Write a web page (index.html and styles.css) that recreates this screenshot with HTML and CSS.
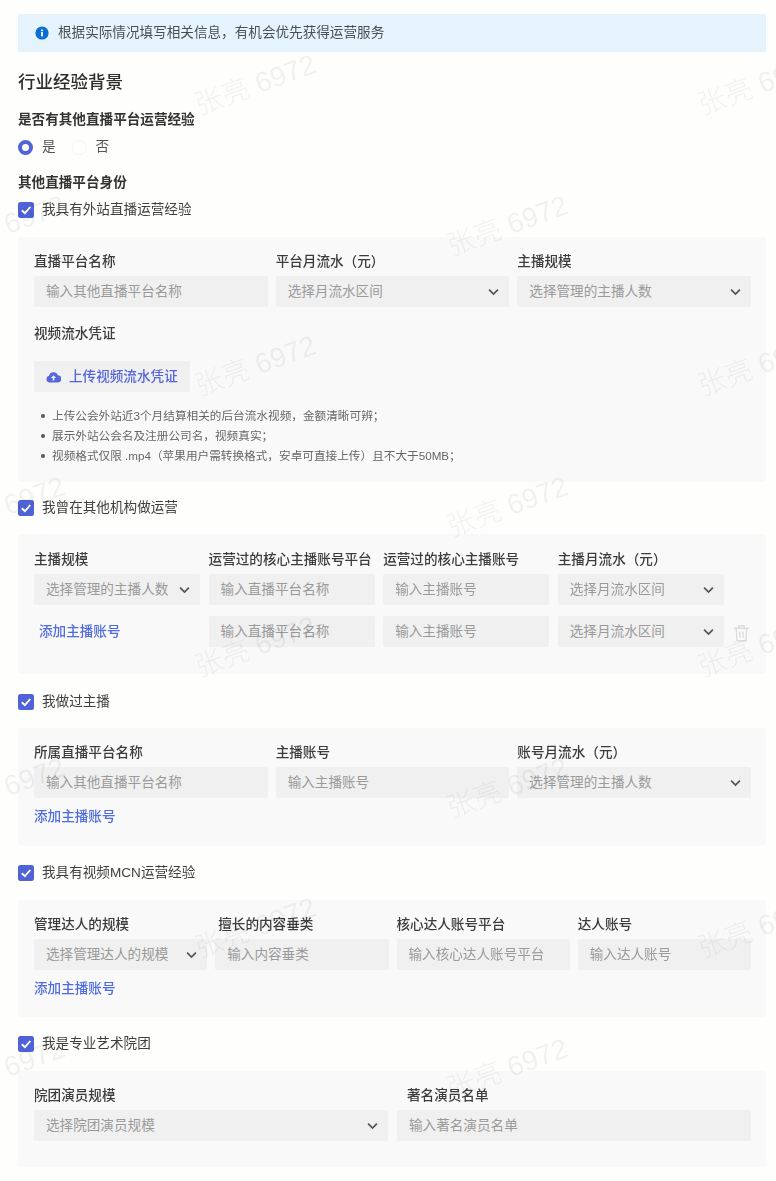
FILE: index.html
```html
<!DOCTYPE html>
<html lang="zh-CN">
<head>
<meta charset="utf-8">
<title>行业经验背景</title>
<link rel="stylesheet" href="styles.css">
</head>
<body>
<svg class="defs" width="0" height="0" aria-hidden="true">
  <symbol id="chev" viewBox="0 0 12 8"><path d="M1.2 1.4 6 6.2l4.8-4.8" fill="none" stroke="#555" stroke-width="1.9"/></symbol>
  <symbol id="tick" viewBox="0 0 16 16"><path d="M3.8 8.2 6.9 11.2 12.3 5" fill="none" stroke="#fff" stroke-width="1.9"/></symbol>
</svg>
<div class="page">
  <div class="alert">
    <svg class="alert-icon" viewBox="0 0 14 14"><circle cx="7" cy="7" r="6.6" fill="#0b6fd3"/><rect x="6.1" y="6" width="1.8" height="4.4" fill="#fff"/><rect x="6.1" y="3.5" width="1.8" height="1.7" fill="#fff"/></svg>
    <span>根据实际情况填写相关信息，有机会优先获得运营服务</span>
  </div>
  <h1 class="title">行业经验背景</h1>
  <div class="q q-first">是否有其他直播平台运营经验</div>
  <div class="radios">
    <span class="radio on"></span><span class="radio-text">是</span>
    <span class="radio off"></span><span class="radio-text">否</span>
  </div>
  <div class="q q-second">其他直播平台身份</div>

  <div class="check check-first"><span class="box"><svg viewBox="0 0 16 16"><use href="#tick"/></svg></span><span>我具有外站直播运营经验</span></div>
  <section class="panel p1">
    <div class="grid three">
      <div class="field"><label>直播平台名称</label><div class="input">输入其他直播平台名称</div></div>
      <div class="field"><label>平台月流水（元）</label><div class="input">选择月流水区间<svg class="chev"><use href="#chev"/></svg></div></div>
      <div class="field"><label>主播规模</label><div class="input">选择管理的主播人数<svg class="chev"><use href="#chev"/></svg></div></div>
    </div>
    <label class="upload-label">视频流水凭证</label>
    <div class="upload">
      <svg class="cloud" viewBox="0 0 16 12"><path d="M4 11.8a3.6 3.6 0 0 1-.7-7.1A4.9 4.9 0 0 1 12.6 4 3.9 3.9 0 0 1 12.2 11.8Z" fill="#5565dc"/><path d="M8 4 5.2 7h1.9v2.8h1.8V7h1.9Z" fill="#f0f0f0"/></svg>
      <span>上传视频流水凭证</span>
    </div>
    <ul class="notes">
      <li>上传公会外站近3个月结算相关的后台流水视频，金额清晰可辨；</li>
      <li>展示外站公会名及注册公司名，视频真实；</li>
      <li>视频格式仅限 .mp4（苹果用户需转换格式，安卓可直接上传）且不大于50MB；</li>
    </ul>
  </section>

  <div class="check"><span class="box"><svg viewBox="0 0 16 16"><use href="#tick"/></svg></span><span>我曾在其他机构做运营</span></div>
  <section class="panel p2">
    <div class="grid four-fixed">
      <div class="field"><label>主播规模</label><div class="input">选择管理的主播人数<svg class="chev"><use href="#chev"/></svg></div></div>
      <div class="field"><label>运营过的核心主播账号平台</label><div class="input">输入直播平台名称</div></div>
      <div class="field"><label>运营过的核心主播账号</label><div class="input">输入主播账号</div></div>
      <div class="field"><label>主播月流水（元）</label><div class="input">选择月流水区间<svg class="chev"><use href="#chev"/></svg></div></div>
    </div>
    <div class="grid four-fixed row-two">
      <a class="add add-inset">添加主播账号</a>
      <div class="input">输入直播平台名称</div>
      <div class="input">输入主播账号</div>
      <div class="input input-del">选择月流水区间<svg class="chev"><use href="#chev"/></svg>
        <svg class="trash" viewBox="0 0 16 17"><path d="M1 4h14M5.5 4V1.6h5V4M3 4l.8 11.8h8.4L13 4M6.5 7v6M9.5 7v6" fill="none" stroke="#dcdcdc" stroke-width="1.3"/></svg>
      </div>
    </div>
  </section>

  <div class="check check-three"><span class="box"><svg viewBox="0 0 16 16"><use href="#tick"/></svg></span><span>我做过主播</span></div>
  <section class="panel p3">
    <div class="grid three">
      <div class="field"><label>所属直播平台名称</label><div class="input">输入其他直播平台名称</div></div>
      <div class="field"><label>主播账号</label><div class="input">输入主播账号</div></div>
      <div class="field"><label>账号月流水（元）</label><div class="input">选择管理的主播人数<svg class="chev"><use href="#chev"/></svg></div></div>
    </div>
    <a class="add add-below">添加主播账号</a>
  </section>

  <div class="check check-four"><span class="box"><svg viewBox="0 0 16 16"><use href="#tick"/></svg></span><span>我具有视频MCN运营经验</span></div>
  <section class="panel p4">
    <div class="grid four">
      <div class="field"><label>管理达人的规模</label><div class="input">选择管理达人的规模<svg class="chev"><use href="#chev"/></svg></div></div>
      <div class="field"><label class="nudge">擅长的内容垂类</label><div class="input">输入内容垂类</div></div>
      <div class="field"><label>核心达人账号平台</label><div class="input">输入核心达人账号平台</div></div>
      <div class="field"><label>达人账号</label><div class="input">输入达人账号</div></div>
    </div>
    <a class="add add-below">添加主播账号</a>
  </section>

  <div class="check check-four"><span class="box"><svg viewBox="0 0 16 16"><use href="#tick"/></svg></span><span>我是专业艺术院团</span></div>
  <section class="panel p5">
    <div class="grid two">
      <div class="field"><label>院团演员规模</label><div class="input">选择院团演员规模<svg class="chev"><use href="#chev"/></svg></div></div>
      <div class="field"><label class="nudge-wide">著名演员名单</label><div class="input">输入著名演员名单</div></div>
    </div>
  </section>

  <div class="marks" aria-hidden="true">
    <div class="mark-row odd"><span>张亮 6972</span><span>张亮 6972</span></div>
    <div class="mark-row"><span>张亮 6972</span><span>张亮 6972</span></div>
    <div class="mark-row odd"><span>张亮 6972</span><span>张亮 6972</span></div>
    <div class="mark-row"><span>张亮 6972</span><span>张亮 6972</span></div>
    <div class="mark-row odd"><span>张亮 6972</span><span>张亮 6972</span></div>
    <div class="mark-row"><span>张亮 6972</span><span>张亮 6972</span></div>
    <div class="mark-row odd"><span>张亮 6972</span><span>张亮 6972</span></div>
    <div class="mark-row"><span>张亮 6972</span><span>张亮 6972</span></div>
  </div>
</div>
</body>
</html>
```

FILE: styles.css
```css
* { box-sizing: border-box; }
html, body { margin: 0; padding: 0; background: #fefefd; }
body {
  font-family: "Liberation Sans", "Noto Sans CJK SC", sans-serif;
  font-size: 13.6px;
  line-height: 20px;
  color: #3a3a3a;
}
.defs { position: absolute; }
.page {
  position: relative;
  width: 776px;
  height: 1181px;
  overflow: hidden;
  padding: 14px 10px 0 18px;
  filter: blur(0.4px);
}
.alert {
  display: flex;
  align-items: center;
  height: 38px;
  padding-left: 17px;
  gap: 9px;
  background: #e5f3fd;
  color: #4a4f55;
  border-radius: 2px;
}
.alert-icon { width: 14px; height: 14px; flex: none; }
.title {
  margin: 18px 0 0;
  font-size: 17.5px;
  line-height: 24px;
  font-weight: 500;
  color: #2e2e2e;
}
.q { font-weight: 700; color: #333; }
.q-first { margin-top: 16px; }
.q-second { margin-top: 16px; }
.radios { display: flex; align-items: center; height: 20px; margin-top: 7px; color: #555; }
.radio { width: 15px; height: 15px; border-radius: 50%; flex: none; }
.radio.on { border: 4.5px solid #4f62d8; background: #fff; }
.radio.off { border: 1px solid #f4f4f2; background: #fff; margin-left: 16px; }
.radio-text { margin-left: 9px; }
.check {
  display: flex;
  align-items: center;
  height: 20px;
  margin-top: 16px;
  gap: 8px;
  color: #3f3f3f;
}
.check-first { margin-top: 7px; }
.check-three { margin-top: 18px; }
.check-four { margin-top: 17px; }
.box {
  width: 16px;
  height: 16px;
  border-radius: 2.5px;
  background: #4f62d8;
  flex: none;
  display: flex;
}
.box svg { width: 16px; height: 16px; }
.panel {
  margin-top: 16px;
  padding: 15px 15px 0 16px;
  background: #f9f9f9;
  border-radius: 3px;
}
.p1 { height: 245px; margin-top: 17px; }
.p2 { height: 140px; padding-top: 16px; }
.p3 { height: 118px; }
.p4 { height: 117px; margin-top: 17px; }
.p5 { height: 96px; margin-top: 17px; }
.grid { display: grid; }
.three { grid-template-columns: repeat(3, 1fr); column-gap: 8px; }
.four { grid-template-columns: repeat(4, 1fr); column-gap: 8px; }
.two { grid-template-columns: repeat(2, 1fr); column-gap: 9px; }
.four-fixed { grid-template-columns: repeat(4, 166px); column-gap: 8.6px; align-items: center; }
.row-two { margin-top: 11px; }
.field { min-width: 0; }
label { display: block; margin-bottom: 4px; color: #3c3c3c; font-weight: 500; white-space: nowrap; }
.nudge { margin-left: 3px; }
.nudge-wide { margin-left: 10px; }
.input {
  position: relative;
  height: 31px;
  line-height: 31px;
  padding-left: 12px;
  background: #f0f0f0;
  color: #9a9a9a;
  border-radius: 2px;
  white-space: nowrap;
}
.chev {
  position: absolute;
  right: 10px;
  top: 12px;
  width: 11px;
  height: 8px;
}
.trash {
  position: absolute;
  left: calc(100% + 9px);
  top: 8px;
  width: 17px;
  height: 18px;
}
.upload-label { margin: 17px 0 0; }
.upload {
  display: flex;
  align-items: center;
  width: 156px;
  height: 31px;
  margin-top: 17px;
  padding-left: 12px;
  gap: 8px;
  background: #f0f0f0;
  border-radius: 2px;
  color: #5565dc;
  font-weight: 500;
}
.cloud { width: 15px; height: 12px; flex: none; }
.notes {
  list-style: none;
  margin: 14px 0 0;
  padding: 0 0 0 18px;
  font-size: 11.65px;
  color: #666;
}
.notes li { position: relative; white-space: nowrap; }
.notes li::before {
  content: "";
  position: absolute;
  left: -11px;
  top: 8px;
  width: 4px;
  height: 4px;
  border-radius: 50%;
  background: #555;
}
.add { display: block; color: #4f6ce0; font-weight: 500; }
.add-inset { margin-left: 5px; }
.add-below { margin-top: 9px; }
.marks {
  position: absolute;
  left: -247.5px;
  top: 15px;
  pointer-events: none;
  font-size: 28px;
  font-weight: 300;
  color: rgba(0, 0, 0, 0.055);
}
.mark-row { display: flex; height: 140.5px; align-items: center; width: 1600px; }
.mark-row.odd { margin-left: 251.5px; }
.mark-row span {
  display: block;
  width: 503px;
  flex: none;
  text-align: center;
  white-space: nowrap;
  transform: rotate(-20deg);
}
```
